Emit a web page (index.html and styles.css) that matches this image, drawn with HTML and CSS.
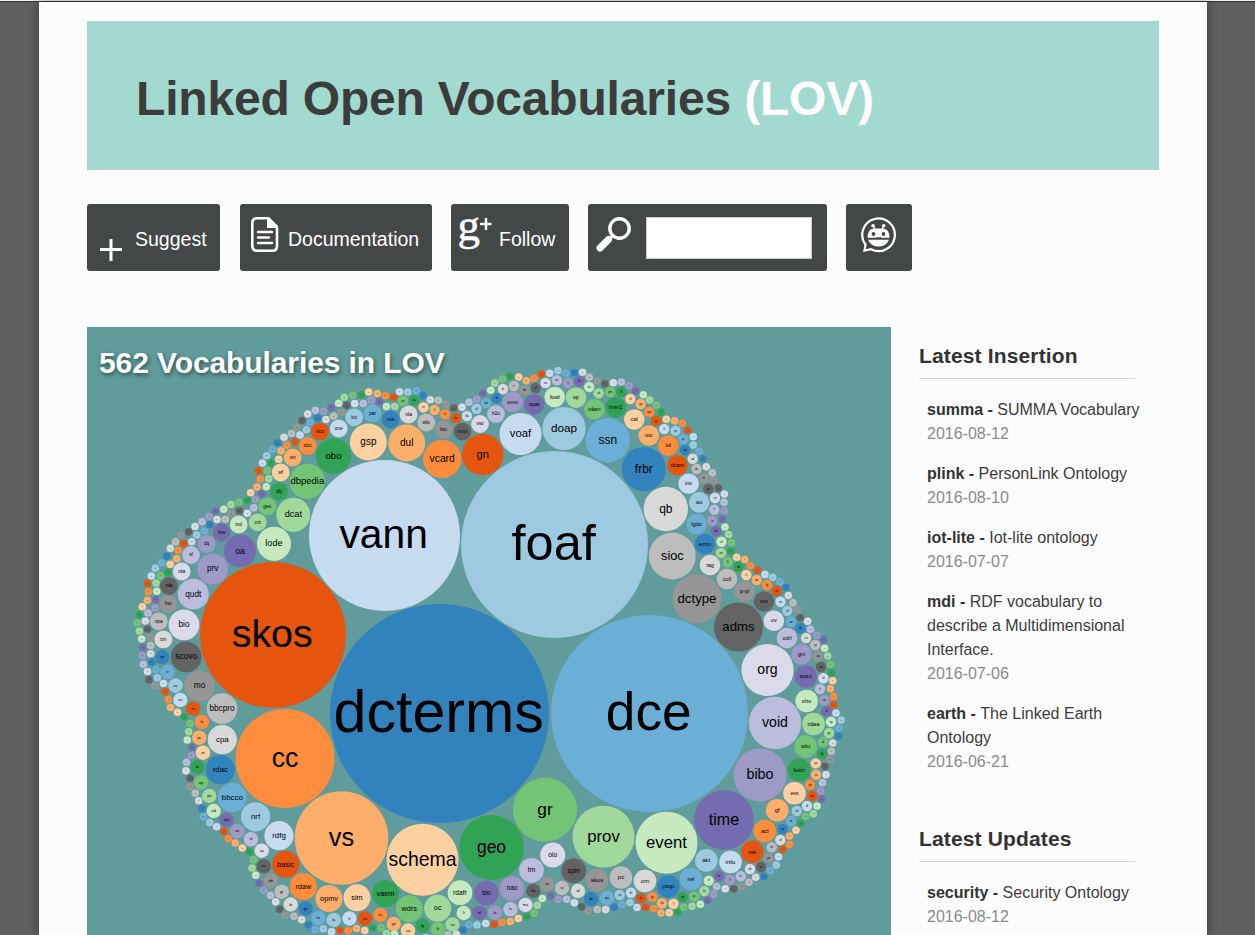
FILE: index.html
```html
<!DOCTYPE html>
<html lang="en">
<head>
<meta charset="utf-8">
<title>Linked Open Vocabularies (LOV)</title>
<link rel="stylesheet" href="styles.css">
</head>
<body>
<div class="topline"></div>
<div class="page">
  <header class="banner">
    <h1>Linked Open Vocabularies <span>(LOV)</span></h1>
  </header>
  <nav class="toolbar">
    <a class="btn btn-suggest">
      <svg class="icon-plus" width="22" height="22" viewBox="0 0 22 22"><path d="M11 0v22M0 10.500h22" stroke="#fff" stroke-width="3"/></svg>
      <span>Suggest</span>
    </a>
    <a class="btn btn-doc">
      <svg class="icon" width="28" height="36" viewBox="0 0 28 36"><path d="M17 1.300H6Q1.300 1.300 1.300 6V29Q1.300 33.700 6 33.700H21.500Q26 33.700 26 29V11Z" fill="none" stroke="#fff" stroke-width="2.600"/><path d="M16 0H18L27 9V11H16Z" fill="#fff"/><path d="M7 15H21M7 20.500H18M7 26H21" stroke="#fff" stroke-width="2.400" stroke-linecap="round"/></svg>
      <span>Documentation</span>
    </a>
    <a class="btn btn-follow">
      <svg class="icon icon-g" width="34" height="36" viewBox="0 0 34 36"><text class="g-mark" x="-.5" y="22.500">g</text><path d="M28 1v12M22 7h11.500" stroke="#fff" stroke-width="2.400"/></svg>
      <span>Follow</span>
    </a>
    <div class="btn btn-search">
      <svg class="icon" width="36" height="36" viewBox="0 0 36 36"><circle cx="23.500" cy="11.500" r="9.700" fill="none" stroke="#fff" stroke-width="3.400"/><path d="M16.500 19L13.500 22" stroke="#fff" stroke-width="3"/><path d="M12.500 22.500L4 31" stroke="#fff" stroke-width="7" stroke-linecap="round"/></svg>
      <input class="search" type="text" aria-label="Search">
    </div>
    <a class="btn btn-bot">
      <svg class="icon" width="36" height="36" viewBox="0 0 36 36"><path d="M5.500 27.500A16.300 16.300 0 1 1 11 32.200L4.500 33.500Z" fill="none" stroke="#fff" stroke-width="2.200"/><path d="M7.500 20.800Q7.500 12 14 11.500H23Q29.500 12 29.500 20.800Z" fill="#fff"/><path d="M8 22.700H29Q26 29.500 18.500 29.500T8 22.700Z" fill="#fff"/><path d="M14.500 12L13.500 8M22.500 12L23.500 8" stroke="#fff" stroke-width="1.300"/><circle cx="13" cy="8.700" r="1.800" fill="#fff"/><circle cx="23.700" cy="8.700" r="1.800" fill="#fff"/><circle cx="13.500" cy="17" r="1.900" fill="#444747"/><circle cx="23.500" cy="17" r="1.900" fill="#444747"/><path d="M16 20.800h5" stroke="#444747"/></svg>
    </a>
  </nav>
  <main class="content">
    <section class="chart">
      <h2>562 Vocabularies in LOV</h2>
      <svg id="bubbles" class="bubbles" width="804" height="608" viewBox="87 327 804 608"></svg>
    </section>
    <aside class="side">
      <section class="latest">
        <h3>Latest Insertion</h3>
        <ul>
          <li><b>summa - </b>SUMMA Vocabulary<time>2016-08-12</time></li>
          <li><b>plink - </b>PersonLink Ontology<time>2016-08-10</time></li>
          <li><b>iot-lite - </b>Iot-lite ontology<time>2016-07-07</time></li>
          <li><b>mdi - </b>RDF vocabulary to describe a Multidimensional Interface.<time>2016-07-06</time></li>
          <li><b>earth - </b>The Linked Earth Ontology<time>2016-06-21</time></li>
        </ul>
      </section>
      <section class="latest">
        <h3>Latest Updates</h3>
        <ul>
          <li><b>security - </b>Security Ontology<time>2016-08-12</time></li>
        </ul>
      </section>
    </aside>
  </main>
</div>
<script src="bubbles.js"></script>
</body>
</html>
```
FILE: styles.css
```css
* { box-sizing: border-box; }
body {
  margin: 0;
  height: 935px;
  overflow: hidden;
  background: #5f5f5f;
  color: #3c3c3c;
  font-family: "Liberation Sans", Arial, sans-serif;
  font-size: 16px;
  line-height: 24px;
}
.topline { height: 2px; background: #f0f3f2; border-bottom: 1px solid #333; }
.page {
  width: 1168px;
  height: 933px;
  margin-left: 39px;
  padding: 19px 48px 0;
  background: #fcfcfc;
  box-shadow: 0 0 10px rgba(0, 0, 0, .4);
  overflow: hidden;
}
.banner {
  display: flex;
  align-items: center;
  height: 149px;
  padding: 7px 49px 0 49px;
  background: #a2dad0;
}
.banner h1 { margin: 0; font-size: 48px; line-height: 60px; letter-spacing: -.18px; color: #3c3c3c; white-space: nowrap; }
.banner h1 span { color: #fff; }
.toolbar { display: flex; margin-top: 34px; }
.btn {
  display: flex;
  align-items: flex-start;
  height: 67px;
  padding-top: 13px;
  border-radius: 3px;
  background: #444747;
  color: #fff;
  font-size: 19.500px;
  white-space: nowrap;
}
.btn span { margin-top: 10px; }
.btn-suggest { width: 133px; padding-left: 13px; margin-right: 20px; }
.icon-plus { margin: 22px 13px 0 0; }
.btn-doc { width: 192px; padding-left: 11px; margin-right: 19px; }
.btn-doc .icon { margin-right: 9px; }
.btn-follow { width: 118px; padding-left: 7px; margin-right: 19px; }
.btn-follow .icon { margin-right: 7px; }
.icon-g { overflow: visible; }
.g-mark { font: 45px "Liberation Serif", serif; fill: #fff; stroke: #fff; stroke-width: .5px; }
.btn-search { width: 239px; padding-left: 8px; margin-right: 19px; }
.btn-search .icon { margin-right: 14px; }
.search { width: 166px; height: 42px; padding: 0 8px; border: 1px solid #ccc; background: #fff; }
.btn-bot { width: 66px; padding-left: 14px; }
.content { display: flex; gap: 28px; margin-top: 56px; }
.chart { display: grid; width: 804px; height: 608px; background: #5f9c9b; }
.chart > * { grid-area: 1 / 1; }
.chart h2 {
  margin: 18px 0 0 12px;
  font-size: 30px;
  line-height: 36px;
  letter-spacing: -.1px;
  color: #fff;
  text-shadow: 1px 2px 4px rgba(0, 0, 0, .5);
}
.bubbles { display: block; }
.bubbles text { text-anchor: middle; fill: #000; }
.side { width: 230px; padding-top: 12px; }
.latest { height: 483px; }
.latest h3 {
  width: 216px;
  height: 40px;
  margin: 0 0 19px;
  padding-top: 5px;
  border-bottom: 1px solid #cdd6d6;
  font-size: 21px;
  letter-spacing: .15px;
  color: #333;
}
.latest ul { width: 230px; margin: 0; padding: 0 8px; list-style: none; }
.latest li { margin-bottom: 16px; }
.latest b { color: #333; }
.latest time { display: block; color: #8a8a8a; }
```
FILE: bubbles.js
```js
// Categorical palette; bubbles are listed in rank order and cycle through it.
const palette = ["#3182bd","#6baed6","#9ecae1","#c6dbef","#e6550d","#fd8d3c","#fdae6b","#fdd0a2","#31a354","#74c476","#a1d99b","#c7e9c0","#756bb1","#9e9ac8","#bcbddc","#dadaeb","#636363","#969696","#bdbdbd","#d9d9d9"];

// name,x,y,radius
const large = `dcterms,439.5,713.5,109.5 dce,649.5,713.5,98.5 foaf,554.5,544.5,93.5 vann,384.5,535.5,75.5 skos,273,635,73 cc,285,758.5,49.5 vs,341.5,838,46.8 schema,422.5,859.7,36 geo,491.5,847.5,32.4 gr,545,809.7,32 prov,603.5,836.7,31 event,666.5,842.7,31 time,724,820,29.8 bibo,760,775,26.5 void,775,723,26.2 org,767.5,670,26.1 adms,738.5,627,24.5 dctype,697,598.7,24.5 sioc,672.3,556,23.4 qb,665.8,509,22.2 frbr,643.8,469,22.1 ssn,607.8,440.3,22.2 doap,564,428.5,21.6 voaf,520.5,434,21 gn,482.7,454.5,20.7 vcard,442.2,459,19.1 dul,406.7,443,18.5 gsp,368.4,442,18.5 obo,333.5,456,17.8 dbpedia,307.3,481.3,17.6 dcat,293.3,514.7,17 lode,274,543.7,17 oa,240,551,16.2 prv,212.7,569,15.4 qudt,193.3,594.2,15.4 bio,184,624.8,15.4 scovo,186.2,656.8,15.4 mo,199.5,686,15.4 bbcpro,222,708.6,15.3 cpa,222.3,739.6,14.6 rdac,220.3,769.6,14.6 bbcco,232.3,797.5,14.6 nrf,255.5,816.8,14.6 rdfg,279,835.7,14.6 basic,285.7,864.4,13.6 rdaw,303.3,886.5,13.5 opmv,329,898.5,13.5 sim,357,897.8,13.5 vaem,385.5,893.6,13.5 wdrs,409.3,908.7,13.5 oc,437.7,908.2,13.5 rdafr,460,892.7,12.4 sio,486.3,893,12.4 nao,512,888.5,12.3 tm,531.5,870.3,12.4 olo,552.7,855,12.5 spin,573.7,870.7,12.4`;

// name,x,y for each group of equal radius
const groups = [
[11.3, `skos,597,880.3 pc,621,877.5 om,645,881 ptop,668.3,886.6 rel,691,879 akt,706.3,860.4 info,730.5,862 nie,752.3,851.7 acl,764.8,831 gf,777.2,810.3 ext,794.5,793.3 locn,799,770 situ,805.7,746.6 rdaa,813.5,724 xhv,806.6,701 swrc,805.7,676.6`],
[10.3, `gm,801.5,654.2 odrl,787,638 ov,773.8,620.7 ont,764,601.5 p-pl,744.6,591.3 coll,727,579 tag,710,565 ecrm,705,544 lgdo,696.5,524 ao,699.2,502.4 inv,688.6,483.8 dcam,677.5,465.4 iol,668.2,445.6 rov,648.8,435.5 cal,634.3,419.5 lmm1,615.8,407.6 rdam,594.4,409.3 sp,576,397.6 fowl,554.7,397 spat,534.2,404.4 omn,512.7,402`],
[8.9, `h2o,496,414 vso,480,424 mvm,462.5,431.5 bio,443.5,429.7 wlo,426.2,422.5 rda,408.6,414.5 ma,390.6,419.5 par,372.6,413.4 lvc,354.2,417.3 one,338.7,428.5 nco,320,431.5 doc,307.7,446 vin,292.7,457.5 wf,280.7,472.5 dly,279.3,491.3 geo,267.3,506.3 cnt,257.7,522.3 md,238.7,524.5 lsw,221.7,532.5 dq,206.6,544 sf,191,555 rda,181.7,571.5 rda,169,586 foo,168.2,604 npa,158.7,621.3 tzn,163.3,639.4`],
[7.2, `an,162.3,657 tr,167.5,672 es,175.5,685.5 os,180.3,700 ns,193.3,708.7 lv,202,722 pr,199.2,737.7 ro,203,752.7 lo,197.5,767 op,201,782.5 po,209.3,796 od,213.7,811 ma,226.7,820 an,237.3,831.3 d,251,839.3 sa,261.7,850.7 or,263.8,866.3 ob,270.7,880.5 gr,281.7,891.7 lo,290.7,904.5 gs,305.7,908.5 lo,318.3,918 la,333.7,920 fr,349.5,918.5 po,365,918.5 ro,380.3,915 go,393.7,924 so,408,930.5 lg,422.7,926 b,438,929.3 so,452.5,924.5 li,463.7,913 of,479.3,913 la,495,912.7 ls,510.5,909.3 ma,525.5,905 kb,533.3,891 sn,547,884 iv,562,888 of,578,891 ds,591,899 qu,607,898`],
[5.2, `no,619.7,895 bf,631,892.7 lo,641,898.4 gn,652.3,897 ho,662,903.3 li,673.5,903.7 ob,682.7,897 jo,694.2,896.6 lo,704.3,891 cl,708.7,880.6 lo,719,876 lt,730,880 ns,740.8,876.3 oh,750,869 as,761,867 po,768.5,858 vo,771.7,847.2 of,780.3,840 sp,782.5,829 to,791,821 cd,796.7,811 dl,807,806 pn,812.3,796 op,810,784.8 sa,816,774.8 po,815.7,763.4 kb,822,753.8 id,823,742 ge,829,733 sp,831,721.8 di,826.5,711.2 op,824.3,700.3 if,820,689 of,823.3,678.3 od,821,667 op,818,656.2 sp,815.3,645 so,806,638 di,800.3,628.3 od,791,621.7 of,787.3,610.8 no,780.5,601.8 on,776.7,591 lg,767,585 po,756.7,580 cl,746.3,575 ob,738.5,566.8 lt,727.8,562.2 on,721,553 of,721.5,541.8 po,716,531.3 vr,712.3,520.8 ti,714.3,509.6 so,715,498 as,708.3,488.7 m,704,478.2 do,696.5,469 ad,692.7,458.8 sw,685,450.2 pr,683.3,439.3 no,675.5,430.8 lt,664.2,429 gr,656.3,420.8 gm,649.3,412 gn,640.7,404 af,630.3,399 kt,621.3,392 pm,610.3,392 cd,598.7,393.3 la,589.2,387 la,579.3,381.2 li,568,383 no,556.8,380.3 no,545.5,383 sl,535.5,388 do,524.5,390.3 is,513.8,386 lo,503,389 di,496.5,398.2 od,486,403 of,476.5,408.7 do,467,416 ns,456,418 lu,445,414.3 li,434.5,410 to,423.5,407.3 po,414.3,400.3 po,403,400.7`]
];

// x,y of the smallest bubbles
const small = `394.7,406.5 386.5,406.5 379.3,401.5 371.3,400 363.3,403.5 354.7,403.5 346.7,405.3 341.3,412.3 333.7,416 326,419.5 317.7,418.3 310.3,422.3 306.5,429.7 300,435 294.7,441.8 287,445.3 281,450.7 278.7,459.3 271,462.7 267.3,470.5 268.7,478.7 266.3,486.8 261.7,494 255.3,499.5 253.8,507.8 247.3,513.3 239.3,511 231.3,513.3 225.3,519.3 217,519.5 210,524.7 204.3,531 196.7,535 191.7,541.7 183.7,543.8 178.3,550.5 176.8,558.8 170.3,564.2 168,572.3 160.3,575.7 156,583 156.7,591.3 155.7,599.7 155,608 148,613 145.3,621 147.5,629 150.3,637.3 150.7,645.5 150.7,653.7 151.7,662.3 155.8,669.5 157.3,677.8 163.5,683.5 165,691.5 168.3,699.5 170.5,707.5 177.5,712.2 184.5,717 190,723.5 188.7,731.7 187.3,740 192,747.3 191.3,755.5 186.5,762.3 186,770.7 190,778.3 190,786.5 195.3,793 198.7,800.7 202,808.5 203.3,816.7 209.7,822.5 216.7,826.7 224,831.5 228.3,838.8 235.3,843 242.3,848 249.5,852 253.3,859.7 252,868 255.7,875.3 259,883.3 263.5,890.3 270.5,895.5 275.7,901.7 279.5,909.3 285.5,915.5 294,916.3 301.7,919.7 308.3,924.7 315.3,929.5 323.3,928.7 331.5,931.7 340,930.5 348.3,930.5 356.5,928.5 364.7,930.5 372.7,928 381,927.5 386.5,933.5 394.5,934 402,940 410,943 418,942 425.5,937.8 433,941 441,940 448,934.7 456.5,934.3 463,930 469,924.5 477,925 485.7,923.5 494,924.5 502,922.5 510.3,921.5 518.3,918.5 526.7,917 534.3,913.3 537.3,905.3 542.3,898.5 550.7,895.7 558.3,899.3 566.7,899.3 574.3,902.7 581.7,906.7 588.7,911.3 597.3,909.5 605.7,909.5 614,907.3 622,904.5 630,902.5 637,907.5 645.3,907.3 653.7,908.7 661,913 669.3,912.7 677.7,912.5 683.7,907 692,906.3 700.3,904.3 707.7,900.3 713.7,894.3 716.7,886.5 725.3,888.7 733.7,889 741.7,886.3 749,882.3 755.7,877.3 764,876.5 770.3,870.7 776.3,865 778.5,856.7 782.7,849.5 789.5,844.5 789.5,836 796,830.3 800.7,823.3 805.5,816.5 813.3,813.7 817,806 821.7,799 820.5,791 822.5,782.7 826,774.7 825,766.3 830.3,759.5 831.3,751.3 832.7,743 838.3,736.3 839,728.3 841.3,720 836,713 833.7,705 833.5,696.5 830.3,688.7 832.7,680.7 831.3,672.5 830.3,664.3 827.7,656 824.7,648.3 823.7,639.7 816.7,635.3 810.5,629.3 807.7,621.3 800,617.7 797.3,609.7 793,602.7 788.3,595.5 786,587.5 780,581.7 772.7,577.3 765,574.5 757.5,570.3 750.3,565.7 744.7,559.5 736.7,557.3 731,551.3 731.5,542.7 728.7,534.5 725,527 722.5,519 724.3,510.7 724,502.3 724.3,494 718.3,488 713.7,480.7 712.3,472.7 706.3,466.7 702.7,458.7 699.3,451.3 693.3,445 693.3,436.7 687.7,430.3 682.3,423.3 674.5,420.7 666.3,419.3 661.3,412.3 656.3,405.3 649.7,400 643.3,394.7 635.7,391 629,385.7 621.3,382 613.3,382.7 604.7,383.7 597,381 589.3,377.3 582.5,372.3 574.3,372.7 566,373.3 558,370.5 549.7,373.3 541.3,374 534.3,378.3 526.3,380.7 518.7,377 510.3,376.3 502.3,379 494.7,383 490.7,390.3 482.7,393.3 476.7,399.3 469,402.3 462,407.3 453.7,408 446,404.3 438.3,400.3 430.3,399.7 423,395.5 416.3,390.7 407.7,392 399.5,391.7 393.7,397.3 385.5,395.7 377.3,393.5 368.7,392 361.3,395 352.7,395.3 344.3,397.3 338.7,403.3 331.3,407.7 323.7,411.3 315.3,410.3 307.7,414 302,420.5 297,427.3 291.5,433.5 284,437.3 277.7,443 272.3,449.5 266.7,455.7 262.5,463 258.7,470.7 260.3,479 257,487 250.7,492.7 247.3,500.3 239,502.3 231,504.5 223.7,509.3 215.5,511 209,516.5 202,521.7 195,526.5 188.7,531.7 181.3,535.3 175.5,541.7 170.3,548.3 166.7,556.3 161.7,562.7 155.3,568.3 151.3,576 147.5,583.3 148.3,591.7 147.3,600.3 142.3,606.7 139.3,614.7 137,622.7 139.3,631 141.7,639 142.7,647.3 142.5,655.7 143.3,664.3 147.5,671.5 149,679.7 155,686`;

const bubbles = large.split(" ").map(s => s.split(","));
for (const [r, list] of groups) {
  for (const s of list.split(" ")) bubbles.push([...s.split(","), r]);
}
for (const s of small.split(" ")) bubbles.push(["o", ...s.split(","), 3.8]);

const ns = "http://www.w3.org/2000/svg";
const svg = document.getElementById("bubbles");
bubbles.forEach(([name, x, y, r], i) => {
  const circle = document.createElementNS(ns, "circle");
  circle.setAttribute("cx", x);
  circle.setAttribute("cy", y);
  circle.setAttribute("r", r);
  circle.setAttribute("fill", palette[i % palette.length]);
  svg.append(circle);
  if (+y > 934) return;
  const size = r * 0.54;
  const label = document.createElementNS(ns, "text");
  label.setAttribute("x", x - (r > 60 ? 0.8 : 0));
  label.setAttribute("y", +y + size * 0.3 + (r > 60 ? 0.6 : 0));
  label.setAttribute("font-size", size);
  label.textContent = name;
  svg.append(label);
});
```
